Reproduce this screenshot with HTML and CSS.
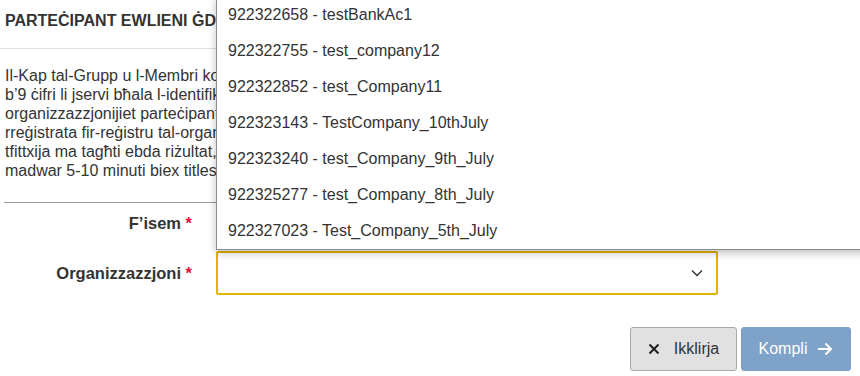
FILE: index.html
```html
<!DOCTYPE html>
<html lang="mt">
<head>
<meta charset="utf-8">
<link rel="stylesheet" href="styles.css">
</head>
<body>
<div class="page">
  <div class="head">PARTEĊIPANT EWLIENI ĠDID</div>
  <div class="intro">
    <p>Il-Kap tal-Grupp u l-Membri kollha għandhom ikunu rreġistrati. Daħħal in-numru<br>
    b’9 ċifri li jservi bħala l-identifikatur uniku tal-organizzazzjoni. Jekk l-<br>
    organizzazzjonijiet parteċipanti mhumiex irreġistrati, l-organizzazzjoni trid tiġi<br>
    rreġistrata fir-reġistru tal-organizzazzjonijiet. Jekk wara r-reġistrazzjoni t-<br>
    tfittxija ma tagħti ebda riżultat, jekk jogħġbok erġa' pprova. Din tista' tieħu<br>
    madwar 5-10 minuti biex titlesta.</p>
  </div>
  <div class="form">
    <div class="row first">
      <label class="lbl">F’isem <span class="req">*</span></label>
      <div class="field"></div>
    </div>
    <div class="row">
      <label class="lbl">Organizzazzjoni <span class="req">*</span></label>
      <div class="field">
        <div class="select">
          <svg class="chev" width="12" height="8" viewBox="0 0 12 8"><path d="M1 1.5 L6 6.5 L11 1.5" fill="none" stroke="#333" stroke-width="1.4"/></svg>
        </div>
        <ul class="menu">
          <li>922322658 - testBankAc1</li>
          <li>922322755 - test_company12</li>
          <li>922322852 - test_Company11</li>
          <li>922323143 - TestCompany_10thJuly</li>
          <li>922323240 - test_Company_9th_July</li>
          <li>922325277 - test_Company_8th_July</li>
          <li>922327023 - Test_Company_5th_July</li>
        </ul>
      </div>
    </div>
  </div>
  <div class="actions">
    <button class="btn cancel"><svg width="12" height="12" viewBox="0 0 12 12"><path d="M1.5 1.5 L10.5 10.5 M10.5 1.5 L1.5 10.5" stroke="#222" stroke-width="2"/></svg><span>Ikklirja</span></button>
    <button class="btn next"><span>Kompli</span><svg width="16" height="14" viewBox="0 0 16 14"><path d="M1 7 H14 M8.5 1.5 L14 7 L8.5 12.5" fill="none" stroke="#fff" stroke-width="2"/></svg></button>
  </div>
</div>
</body>
</html>
```

FILE: styles.css
```css
html, body {
  margin: 0;
  padding: 0;
  background: #fff;
}
body {
  font-family: "Liberation Sans", Arial, sans-serif;
  color: #333;
  width: 860px;
  height: 376px;
  overflow: hidden;
}
.page {
  position: relative;
}
.head {
  height: 49px;
  box-sizing: border-box;
  padding: 11px 0 0 5px;
  font-size: 16px;
  line-height: 19px;
  font-weight: bold;
  border-bottom: 1px solid #e2e2e2;
  white-space: nowrap;
}
.intro {
  padding: 0 0 0 5px;
}
.intro p {
  margin: 17px 0 0 0;
  font-size: 16px;
  line-height: 19px;
  white-space: nowrap;
}
.form {
  margin: 22px 0 0 4px;
  border-top: 1px solid #9a9a9a;
}
.row {
  display: flex;
  align-items: center;
  height: 44px;
}
.row.first {
  height: 40px;
  margin-bottom: 8px;
}
.lbl {
  width: 188px;
  text-align: right;
  font-size: 16.5px;
  font-weight: bold;
  color: #333;
}
.req {
  color: #e0103a;
}
.field {
  margin-left: 24px;
  position: relative;
  width: 502px;
  height: 44px;
}
.row.first .field {
  height: 40px;
}
.select {
  box-sizing: border-box;
  width: 502px;
  height: 44px;
  border: 2px solid #e2b300;
  border-radius: 2px;
  display: flex;
  align-items: center;
  justify-content: flex-end;
  padding-right: 13px;
}
.chev {
  display: block;
}
.menu {
  position: absolute;
  left: 0;
  bottom: 45px;
  width: 660px;
  margin: 0;
  padding: 0;
  list-style: none;
  background: #fff;
  border-left: 1px solid #8a8a8a;
  border-bottom: 1px solid #8a8a8a;
  box-shadow: 0 3px 8px rgba(0,0,0,0.25);
}
.menu li {
  height: 36px;
  line-height: 36px;
  padding-left: 11px;
  font-size: 16px;
  color: #333;
  white-space: nowrap;
}
.actions {
  display: flex;
  justify-content: flex-end;
  gap: 4px;
  margin-top: 32px;
  padding-right: 9px;
}
.btn {
  height: 44px;
  box-sizing: border-box;
  border-radius: 3px;
  font-family: "Liberation Sans", Arial, sans-serif;
  font-size: 16px;
  display: flex;
  align-items: center;
  justify-content: center;
  gap: 10px;
  padding: 0;
}
.cancel {
  width: 107px;
  background: #e1e1e1;
  border: 1px solid #a8a8a8;
  color: #333;
  gap: 14px;
}
.next {
  width: 110px;
  background: #7fa2c9;
  border: 1px solid #7fa2c9;
  color: #fff;
}
.btn svg {
  display: block;
}
```
